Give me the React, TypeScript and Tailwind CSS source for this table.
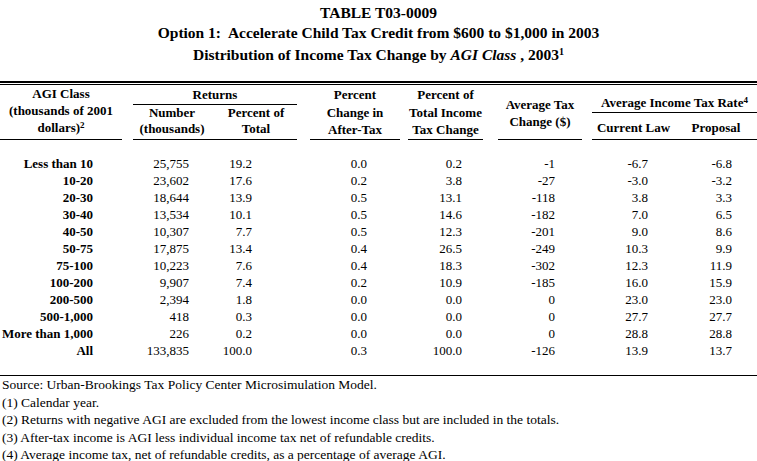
import React from "react";

const rows: string[][] = [
  ["Less than 10", "25,755", "19.2", "0.0", "0.2", "-1", "-6.7", "-6.8"],
  ["10-20", "23,602", "17.6", "0.2", "3.8", "-27", "-3.0", "-3.2"],
  ["20-30", "18,644", "13.9", "0.5", "13.1", "-118", "3.8", "3.3"],
  ["30-40", "13,534", "10.1", "0.5", "14.6", "-182", "7.0", "6.5"],
  ["40-50", "10,307", "7.7", "0.5", "12.3", "-201", "9.0", "8.6"],
  ["50-75", "17,875", "13.4", "0.4", "26.5", "-249", "10.3", "9.9"],
  ["75-100", "10,223", "7.6", "0.4", "18.3", "-302", "12.3", "11.9"],
  ["100-200", "9,907", "7.4", "0.2", "10.9", "-185", "16.0", "15.9"],
  ["200-500", "2,394", "1.8", "0.0", "0.0", "0", "23.0", "23.0"],
  ["500-1,000", "418", "0.3", "0.0", "0.0", "0", "27.7", "27.7"],
  ["More than 1,000", "226", "0.2", "0.0", "0.0", "0", "28.8", "28.8"],
  ["All", "133,835", "100.0", "0.3", "100.0", "-126", "13.9", "13.7"],
];

const pads = [
  "pr-[35px] font-bold",
  "pr-[26px]",
  "pr-[50px]",
  "pr-[37px]",
  "pr-[28px]",
  "pr-[32px]",
  "pr-[27px]",
  "pr-[25px]",
];

const cols = "grid grid-cols-[128px_87px_87px_102px_86px_97px_88px_82px]";

export default function App() {
  return (
    <div className="w-[757px] h-[461px] overflow-hidden bg-white text-black font-['Liberation_Serif',serif]">
      {/* Title */}
      <div className="pt-[3px] text-center font-bold text-[15.5px] leading-[20px]">
        <div>TABLE T03-0009</div>
        <div>Option 1:&nbsp; Accelerate Child Tax Credit from $600 to $1,000 in 2003</div>
        <div className="mt-[2px]">
          Distribution of Income Tax Change by <i>AGI Class</i> , 2003
          <sup className="text-[10px]">1</sup>
        </div>
      </div>

      {/* Double rule */}
      <div className="mt-[16px] h-[4px] border-t-2 border-b border-black" />

      {/* Header */}
      <div className={`${cols} h-[54px] text-[13px] font-bold text-center`}>
        <div className="mr-[6px] border-b border-black leading-[17px]">
          <div>AGI Class</div>
          <div>(thousands of 2001</div>
          <div>
            dollars)<sup className="text-[9px]">2</sup>
          </div>
        </div>
        <div className="col-span-2 mx-[5px] flex flex-col border-b border-black">
          <div className="pt-[1px] leading-[18px] border-b border-black">Returns</div>
          <div className="grid grid-cols-2 leading-[16px]">
            <div className="pr-[4px]">
              <div>Number</div>
              <div>(thousands)</div>
            </div>
            <div>
              <div>Percent of</div>
              <div>Total</div>
            </div>
          </div>
        </div>
        <div className="ml-[8px] mr-[4px] border-b border-black pt-[1px] leading-[17.5px]">
          <div>Percent</div>
          <div>Change in</div>
          <div>After-Tax</div>
        </div>
        <div className="ml-[4px] mr-[7px] border-b border-black pt-[1px] leading-[17.5px]">
          <div>Percent of</div>
          <div>Total Income</div>
          <div>Tax Change</div>
        </div>
        <div className="ml-[8px] mr-[5px] border-b border-black pt-[11px] leading-[17px]">
          <div>Average Tax</div>
          <div>Change ($)</div>
        </div>
        <div className="col-span-2 ml-[5px] flex flex-col border-b border-black">
          <div className="pt-[9px] leading-[18px] border-b border-black">
            Average Income Tax Rate<sup className="text-[9px]">4</sup>
          </div>
          <div className="grid grid-cols-[83px_82px] pt-[7px] leading-[16px]">
            <div>Current Law</div>
            <div>Proposal</div>
          </div>
        </div>
      </div>

      {/* Data */}
      <div className="mt-[16px] text-[13px]">
        {rows.map((r, i) => (
          <div key={i} className={`${cols} h-[17px] leading-[17px]`}>
            {r.map((c, j) => (
              <div key={j} className={`text-right whitespace-nowrap ${pads[j]}`}>
                {c}
              </div>
            ))}
          </div>
        ))}
      </div>

      {/* Bottom rule */}
      <div className="mt-[16px] border-t border-black" />

      {/* Notes */}
      <div className="pl-[2px] text-[13.5px] leading-[17.5px]">
        <div>Source: Urban-Brookings Tax Policy Center Microsimulation Model.</div>
        <div>(1) Calendar year.</div>
        <div>
          (2) Returns with negative AGI are excluded from the lowest income class but are included in the totals.
        </div>
        <div>(3) After-tax income is AGI less individual income tax net of refundable credits.</div>
        <div>(4) Average income tax, net of refundable credits, as a percentage of average AGI.</div>
      </div>
    </div>
  );
}
